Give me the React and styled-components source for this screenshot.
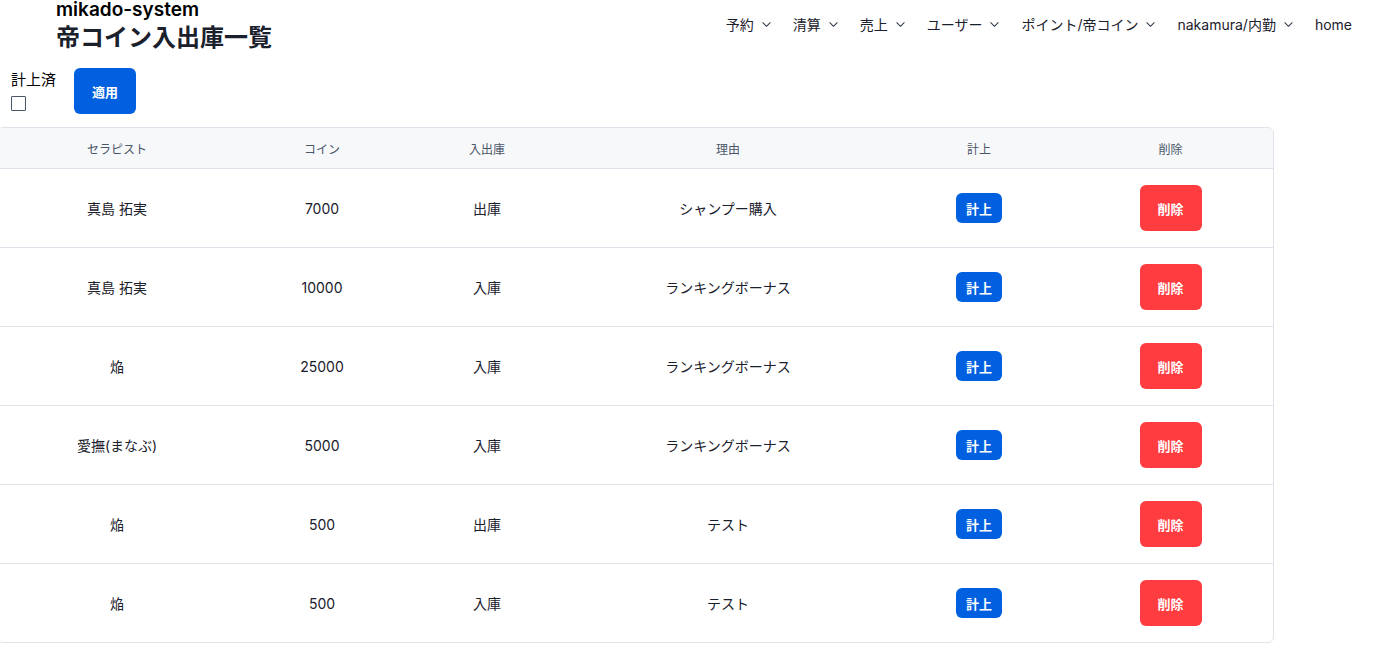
import React from 'react';
import styled, { createGlobalStyle } from 'styled-components';

const ROWS = [
  { name: '真島 拓実', coin: 7000, kind: '出庫', reason: 'シャンプー購入' },
  { name: '真島 拓実', coin: 10000, kind: '入庫', reason: 'ランキングボーナス' },
  { name: '焔', coin: 25000, kind: '入庫', reason: 'ランキングボーナス' },
  { name: '愛撫(まなぶ)', coin: 5000, kind: '入庫', reason: 'ランキングボーナス' },
  { name: '焔', coin: 500, kind: '出庫', reason: 'テスト' },
  { name: '焔', coin: 500, kind: '入庫', reason: 'テスト' },
];

const NAV = ['予約', '清算', '売上', 'ユーザー', 'ポイント/帝コイン', 'nakamura/内勤'];

const COLS = [238, 172, 158, 324, 178, 205];

function Chevron() {
  return (
    <svg width="11" height="11" viewBox="0 0 24 24" fill="none" stroke="currentColor" strokeWidth="2.2" strokeLinecap="round" strokeLinejoin="round">
      <path d="M4 8l8 8 8-8" />
    </svg>
  );
}

export default function App() {
  return (
    <>
      <GlobalStyle />
      <Header>
        <Brand>
          <SiteName>mikado-system</SiteName>
          <Title>帝コイン入出庫一覧</Title>
        </Brand>
        <Nav>
          {NAV.map((item) => (
            <NavItem key={item}>
              {item}
              <Chevron />
            </NavItem>
          ))}
          <NavItem>home</NavItem>
        </Nav>
      </Header>

      <Filter>
        <FilterField>
          <FilterLabel>計上済</FilterLabel>
          <Checkbox type="checkbox" />
        </FilterField>
        <ApplyButton>適用</ApplyButton>
      </Filter>

      <TableWrap>
        <Table>
          <colgroup>
            {COLS.map((w, i) => (
              <col key={i} style={{ width: w }} />
            ))}
          </colgroup>
          <thead>
            <tr>
              <Th>セラピスト</Th>
              <Th>コイン</Th>
              <Th>入出庫</Th>
              <Th>理由</Th>
              <Th>計上</Th>
              <Th>削除</Th>
            </tr>
          </thead>
          <tbody>
            {ROWS.map((row, i) => (
              <Tr key={i}>
                <Td>{row.name}</Td>
                <Td>{row.coin}</Td>
                <Td>{row.kind}</Td>
                <Td>{row.reason}</Td>
                <Td>
                  <SmallButton>計上</SmallButton>
                </Td>
                <Td>
                  <DeleteButton>削除</DeleteButton>
                </Td>
              </Tr>
            ))}
          </tbody>
        </Table>
      </TableWrap>
    </>
  );
}

const GlobalStyle = createGlobalStyle`
  body {
    margin: 0;
    background: #fff;
    font-family: Inter, 'Noto Sans CJK JP', sans-serif;
    color: #1a202c;
  }
`;

const Header = styled.header`
  display: flex;
  justify-content: space-between;
  align-items: flex-start;
  padding: 0 36px 0 56px;
`;

const Brand = styled.div`
  display: flex;
  flex-direction: column;
`;

const SiteName = styled.div`
  font-size: 19px;
  font-weight: 600;
  line-height: 20px;
  color: #000;
`;

const Title = styled.h1`
  margin: 0;
  font-size: 24px;
  font-weight: 700;
  line-height: 36px;
  color: #1a202c;
`;

const Nav = styled.nav`
  display: flex;
  align-items: center;
  gap: 21px;
  height: 48px;
`;

const NavItem = styled.div`
  display: flex;
  align-items: center;
  gap: 7px;
  font-size: 14px;
  font-weight: 400;
  color: #1a202c;

  svg {
    color: #2d3748;
  }
`;

const Filter = styled.div`
  display: flex;
  align-items: flex-start;
  gap: 18px;
  padding: 12px 0 0 11px;
`;

const FilterField = styled.div`
  display: flex;
  flex-direction: column;
  gap: 6px;
  padding-top: 2px;
`;

const FilterLabel = styled.label`
  font-size: 15px;
  line-height: 20px;
  color: #000;
`;

const Checkbox = styled.input`
  appearance: none;
  margin: 0;
  width: 15px;
  height: 15px;
  border: 1px solid #4a5568;
  border-radius: 1px;
  background: #fff;
`;

const ApplyButton = styled.button`
  width: 62px;
  height: 46px;
  border: none;
  border-radius: 6px;
  background: #0060df;
  color: #fff;
  font-family: inherit;
  font-size: 13px;
  font-weight: 700;
`;

const TableWrap = styled.div`
  margin: 13px 0 0 -3px;
  width: 1275px;
  border: 1px solid #e2e3ea;
  border-radius: 6px;
  overflow: hidden;
`;

const Table = styled.table`
  width: 100%;
  border-collapse: collapse;
  table-layout: fixed;
`;

const Th = styled.th`
  height: 40px;
  padding: 0;
  background: #f7f8fa;
  border-bottom: 1px solid #e2e3ea;
  font-size: 12px;
  font-weight: 400;
  color: #4a5568;
  text-align: center;
`;

const Tr = styled.tr`
  &:not(:last-child) td {
    border-bottom: 1px solid #e2e3ea;
  }
`;

const Td = styled.td`
  height: 78px;
  padding: 0;
  font-size: 14px;
  color: #1a202c;
  text-align: center;
  vertical-align: middle;
`;

const SmallButton = styled.button`
  width: 46px;
  height: 30px;
  border: none;
  border-radius: 6px;
  background: #0060df;
  color: #fff;
  font-family: inherit;
  font-size: 13px;
  font-weight: 700;
  padding: 0;
`;

const DeleteButton = styled.button`
  width: 62px;
  height: 46px;
  border: none;
  border-radius: 6px;
  background: #ff3c40;
  color: #fff;
  font-family: inherit;
  font-size: 13px;
  font-weight: 700;
  padding: 0;
`;
